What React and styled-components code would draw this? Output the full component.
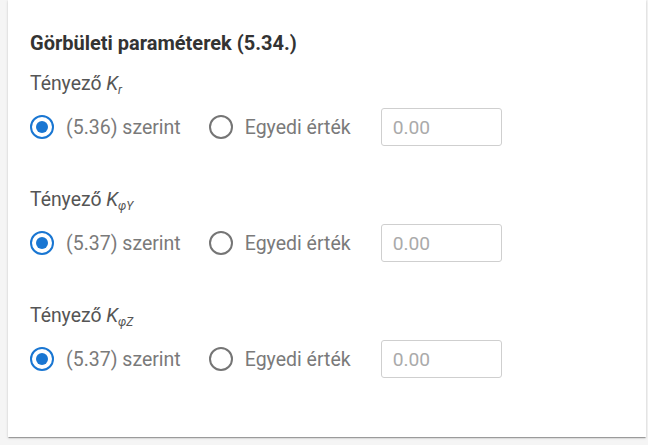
import styled, { createGlobalStyle } from 'styled-components';

const GlobalStyle = createGlobalStyle`
  html, body {
    margin: 0;
    padding: 0;
    background: #f5f5f5;
    font-family: Roboto, "Liberation Sans", sans-serif;
  }
`

const groups = [
  { sub: 'r', formula: '(5.36)' },
  { sub: 'φY', formula: '(5.37)' },
  { sub: 'φZ', formula: '(5.37)' },
]

function RadioOption({ checked, children }) {
  return (
    <Option>
      <Circle checked={checked} />
      <OptionText>{children}</OptionText>
    </Option>
  )
}

function App() {
  return (
    <Page>
      <GlobalStyle />
      <Card>
        <Title>Görbületi paraméterek (5.34.)</Title>
        {groups.map((g, i) => (
          <Group key={i}>
            <FactorLabel>
              Tényező <Symbol>K<Sub>{g.sub}</Sub></Symbol>
            </FactorLabel>
            <Row>
              <RadioOption checked>{g.formula} szerint</RadioOption>
              <RadioOption>Egyedi érték</RadioOption>
              <ValueInput placeholder="0.00" />
            </Row>
          </Group>
        ))}
      </Card>
    </Page>
  )
}

const Page = styled.div`
  padding: 0 2px 8px 8px;
`
const Card = styled.div`
  background: #fff;
  padding: 31px 22px 53px 22px;
  box-shadow: 0 2px 1px -1px rgba(0,0,0,0.2), 0 1px 1px 0 rgba(0,0,0,0.14), 0 1px 3px 0 rgba(0,0,0,0.12);
  display: flex;
  flex-direction: column;
`
const Title = styled.div`
  font-size: 20px;
  line-height: 24px;
  font-weight: 700;
  color: #333;
  margin-bottom: 15px;
`
const Group = styled.div`
  display: flex;
  flex-direction: column;
  gap: 4px;
  & + & {
    margin-top: 34px;
  }
`
const FactorLabel = styled.div`
  font-size: 19.4px;
  line-height: 28px;
  color: #555;
`
const Symbol = styled.span`
  font-style: italic;
`
const Sub = styled.sub`
  font-size: 0.62em;
  vertical-align: -0.35em;
  line-height: 0;
`
const Row = styled.div`
  display: flex;
  align-items: center;
  height: 50px;
`
const Option = styled.label`
  display: inline-flex;
  align-items: center;
  gap: 12px;
  margin-right: 28px;
  cursor: pointer;
`
const Circle = styled.span`
  box-sizing: border-box;
  width: 24px;
  height: 24px;
  border-radius: 50%;
  border: 2.4px solid ${p => (p.checked ? '#1976d2' : '#757575')};
  display: flex;
  align-items: center;
  justify-content: center;
  &::after {
    content: '';
    width: 12px;
    height: 12px;
    border-radius: 50%;
    background: ${p => (p.checked ? '#1976d2' : 'transparent')};
  }
`
const OptionText = styled.span`
  font-size: 19.5px;
  color: #7a7a7a;
`
const ValueInput = styled.input`
  box-sizing: border-box;
  width: 121px;
  height: 38px;
  margin-left: 2px;
  border: 1px solid #cfcfcf;
  border-radius: 3px;
  padding: 0 11px;
  font-family: Roboto, "Liberation Sans", sans-serif;
  font-size: 19.2px;
  color: #333;
  outline: none;
  &::placeholder {
    color: #aaa;
  }
`

export default App;
